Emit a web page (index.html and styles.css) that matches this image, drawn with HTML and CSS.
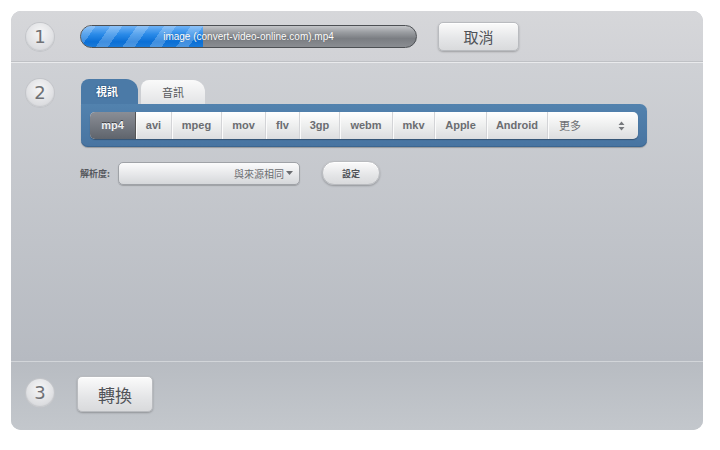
FILE: index.html
```html
<!DOCTYPE html>
<html>
<head>
<meta charset="utf-8">
<link rel="stylesheet" href="styles.css">
</head>
<body>
<div class="panel">
  <div class="sec sec1">
    <div class="step">1</div>
    <div class="bar">
      <div class="fill" style="width:122px"></div>
      <div class="bar-text">image (convert-video-online.com).mp4</div>
    </div>
    <button class="btn cancel">取消</button>
  </div>
  <div class="sec sec2">
    <div class="step">2</div>
    <div class="content">
      <div class="tabs">
        <div class="tab active">視訊</div>
        <div class="tab">音訊</div>
      </div>
      <div class="box">
        <div class="formats">
          <div class="fmt on w46">mp4</div>
          <div class="fmt w36">avi</div>
          <div class="fmt w50">mpeg</div>
          <div class="fmt w44">mov</div>
          <div class="fmt w34">flv</div>
          <div class="fmt w40">3gp</div>
          <div class="fmt w53">webm</div>
          <div class="fmt w42">mkv</div>
          <div class="fmt w52">Apple</div>
          <div class="fmt w61">Android</div>
          <div class="fmt more"><span class="more-t">更多</span><svg class="arrows" width="7" height="10" viewBox="0 0 7 10"><path d="M0.5 4 L3.5 0.5 L6.5 4 Z M0.5 6 L3.5 9.5 L6.5 6 Z" fill="#77797d"/></svg></div>
        </div>
      </div>
      <div class="res">
        <span class="res-label">解析度:</span>
        <div class="select"><span>與來源相同</span><svg class="caret" width="7" height="4" viewBox="0 0 7 4"><path d="M0 0 L7 0 L3.5 4 Z" fill="#6a6c70"/></svg></div>
        <button class="btn set">設定</button>
      </div>
    </div>
  </div>
  <div class="sec sec3">
    <div class="step">3</div>
    <button class="btn convert">轉換</button>
  </div>
</div>
</body>
</html>
```

FILE: styles.css
```css
* { box-sizing: border-box; }
body {
  margin: 0;
  background: #fff;
  font-family: "Liberation Sans", "Noto Sans CJK TC", sans-serif;
}
.panel {
  margin: 11px 0 0 11px;
  width: 692px;
  height: 419px;
  border-radius: 10px;
  overflow: hidden;
  background: #c0c4c9;
  display: flex;
  flex-direction: column;
}
.sec { display: flex; }
.sec1 {
  height: 52px;
  align-items: center;
  padding-left: 15px;
  background: linear-gradient(#d6d7da, #d1d2d6);
  border-bottom: 1px solid #e9eaec;
  box-shadow: inset 0 -2px 0 -1px #bfc1c5;
}
.sec2 {
  height: 299px;
  padding: 16px 0 0 15px;
  background: linear-gradient(#cfd1d5, #b6bac1);
  border-bottom: 1px solid #d2d5d9;
}
.sec3 {
  flex: 1;
  align-items: center;
  padding: 0 0 6px 15px;
  background: linear-gradient(#b8bcc2, #c3c7cc);
}
.step {
  width: 28px;
  height: 28px;
  border-radius: 50%;
  flex: none;
  background: radial-gradient(circle at 50% 35%, #f6f6f7, #dcdde0 70%, #cfd0d4);
  box-shadow: 0 0 0 1px #c3c5c9, inset 0 -1px 1px #c5c7cb;
  color: #6f7175;
  font-family: "DejaVu Sans", sans-serif;
  font-size: 18px;
  line-height: 28px;
  text-align: center;
}
.bar {
  margin-left: 26px;
  width: 337px;
  height: 23px;
  border-radius: 12px;
  border: 1px solid #4d5054;
  background: linear-gradient(#c4c6c9 0%, #9a9da1 30%, #7a7d82 60%, #8a8d92 100%);
  display: grid;
  overflow: hidden;
}
.fill, .bar-text { grid-area: 1 / 1; }
.fill {
  height: 100%;
  background:
    repeating-linear-gradient(-55deg, rgba(255,255,255,0) 0 12px, rgba(255,255,255,0.22) 12px 22px),
    linear-gradient(#6fb2f5 0%, #2a8ae8 40%, #0a6fd6 75%, #1a7ad9 100%);
}
.bar-text {
  color: #fff;
  font-size: 10px;
  line-height: 21px;
  text-align: center;
  text-shadow: 0 0 1px rgba(0,0,0,0.3);
}
.btn {
  font-family: "Noto Sans CJK TC", sans-serif;
  color: #4f5257;
  border: 1px solid #b9bbbf;
  background: linear-gradient(#fbfbfb, #e4e5e7 60%, #d9dadc);
  box-shadow: 0 1px 2px rgba(0,0,0,0.25), inset 0 1px 0 #fff;
  padding: 0;
}
.cancel {
  margin-left: 21px;
  width: 81px;
  height: 29px;
  border-radius: 5px;
  font-size: 15px;
}
.content {
  margin-left: 27px;
  display: flex;
  flex-direction: column;
}
.tabs { display: flex; align-items: flex-end; height: 25px; }
.tab {
  height: 24px;
  width: 64px;
  margin-left: 3px;
  border-radius: 8px 12px 0 0;
  background: linear-gradient(#fafafa, #e3e4e6);
  color: #55575b;
  font-family: "Noto Sans CJK TC", sans-serif;
  font-size: 11px;
  line-height: 24px;
  text-align: center;
}
.tab.active {
  margin-left: 0;
  width: 57px;
  height: 25px;
  border-radius: 8px 12px 0 0;
  background: #4b7aa7;
  color: #fff;
  font-weight: bold;
  text-align: left;
  padding-left: 15px;
  text-shadow: 0 0 2px #1d3b5c;
}
.box {
  width: 566px;
  height: 43px;
  background: linear-gradient(#5282ae, #4874a1);
  border-radius: 0 7px 7px 7px;
  box-shadow: 0 1px 1px rgba(0,0,0,0.25), inset 0 -1px 0 #3c6690;
  padding: 8px 9px;
}
.formats {
  display: flex;
  height: 27px;
  border-radius: 5px;
  overflow: hidden;
  background: linear-gradient(#ffffff, #eceded 55%, #dcdddf);
  box-shadow: 0 1px 1px rgba(0,0,0,0.3);
}
.fmt {
  flex: none;
  font-size: 11px;
  font-weight: bold;
  color: #6b6d71;
  line-height: 27px;
  text-align: center;
  border-right: 1px solid #d3d4d7;
  box-shadow: 1px 0 0 #fbfbfb;
}
.fmt.on {
  background: linear-gradient(#8a8e96, #5f646c);
  color: #eef0f2;
  text-shadow: 0 -1px 0 #3d4046;
  border-right: 1px solid #555;
}
.w34 { width: 34px; } .w36 { width: 36px; } .w40 { width: 40px; } .w42 { width: 42px; }
.w44 { width: 44px; } .w46 { width: 46px; } .w50 { width: 50px; } .w52 { width: 52px; }
.w53 { width: 53px; } .w61 { width: 61px; }
.more {
  flex: 1;
  border-right: none;
  box-shadow: none;
  display: flex;
  justify-content: space-between;
  align-items: center;
  padding: 0 13px 0 11px;
}
.more-t {
  font-family: "Noto Sans CJK TC", sans-serif;
  font-weight: normal;
  color: #6b6d71;
}
.arrows { display: block; }
.res {
  display: flex;
  align-items: center;
  margin-top: 14px;
  margin-left: -1px;
}
.res-label {
  font-family: "Noto Sans CJK TC", sans-serif;
  font-size: 9px;
  font-weight: bold;
  color: #55585d;
  width: 38px;
}
.select {
  width: 182px;
  height: 23px;
  border-radius: 5px;
  border: 1px solid #9fa2a7;
  background: linear-gradient(#fbfbfc, #e8e9eb 50%, #d5d7da);
  box-shadow: 0 1px 1px rgba(0,0,0,0.2);
  display: flex;
  justify-content: flex-end;
  align-items: center;
  padding-right: 6px;
  font-family: "Noto Sans CJK TC", sans-serif;
  font-size: 10px;
  color: #6a6c70;
}
.caret { display: block; margin-left: 2px; }
.set {
  margin-left: 22px;
  width: 58px;
  height: 24px;
  border-radius: 12px;
  font-size: 9px;
  font-weight: bold;
}
.convert {
  margin-left: 23px;
  margin-top: 2px;
  width: 76px;
  height: 36px;
  border-radius: 5px;
  font-size: 17px;
}
```
